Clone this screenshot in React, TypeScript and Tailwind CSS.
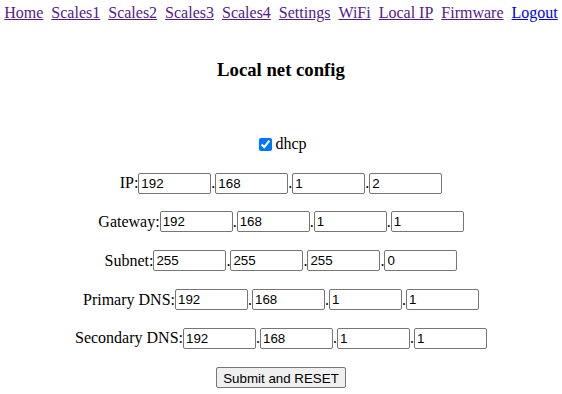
import React from "react";

const serif = { fontFamily: '"Liberation Serif", "Times New Roman", serif' };

const links = ["Home", "Scales1", "Scales2", "Scales3", "Scales4", "Settings", "WiFi", "Local IP", "Firmware"];

function IpRow({ label, values }: { label: string; values: string[] }) {
  return (
    <div className="flex h-[38.8px] items-center justify-center text-[16px] text-black">
      <span>{label}:</span>
      {values.map((v, i) => (
        <React.Fragment key={i}>
          {i > 0 && <span>.</span>}
          <input
            type="text"
            defaultValue={v}
            className="h-[21px] w-[73px] rounded-[2px] border border-[#767676] bg-white px-[2px] py-[1px] text-[13.33px] text-black outline-none [font-family:'Liberation_Sans',Arial,sans-serif]"
          />
        </React.Fragment>
      ))}
    </div>
  );
}

export default function App() {
  return (
    <div className="min-h-[394px] w-full bg-white text-black" style={serif}>
      <div className="flex h-[27px] items-center justify-center pb-[1px] text-[16px] leading-[18px] whitespace-pre">
        {links.map((l) => (
          <React.Fragment key={l}>
            <a href="#" className="text-[#551a8b] underline">{l}</a>
            <span>{"\u00a0\u00a0"}</span>
          </React.Fragment>
        ))}
        <a href="#" className="text-[#0000ee] underline">Logout</a>
      </div>
      <div className="mt-[32px] flex h-[22px] items-center justify-center text-[18.72px] font-bold">
        Local net config
      </div>
      <div className="mt-[44px] flex flex-col">
        <div className="flex h-[38.8px] items-center justify-center text-[16px]">
          <input type="checkbox" defaultChecked className="m-[3px] ml-[4px] h-[13px] w-[13px] accent-[#0075ff]" />
          <span>dhcp</span>
        </div>
        <IpRow label="IP" values={["192", "168", "1", "2"]} />
        <IpRow label="Gateway" values={["192", "168", "1", "1"]} />
        <IpRow label="Subnet" values={["255", "255", "255", "0"]} />
        <IpRow label="Primary DNS" values={["192", "168", "1", "1"]} />
        <IpRow label="Secondary DNS" values={["192", "168", "1", "1"]} />
        <div className="flex h-[38.8px] items-center justify-center">
          <button className="h-[21px] rounded-[2px] border border-[#767676] bg-[#efefef] px-[6px] py-[1px] text-[13.33px] text-black [font-family:'Liberation_Sans',Arial,sans-serif]">
            Submit and RESET
          </button>
        </div>
      </div>
    </div>
  );
}
